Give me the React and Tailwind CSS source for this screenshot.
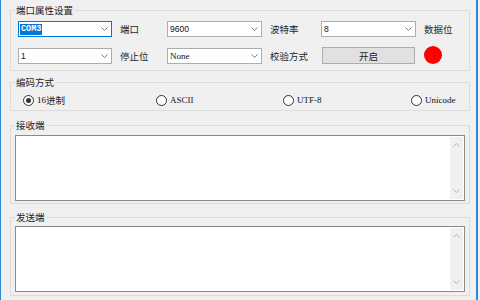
import React from 'react'

const cn = "font-['Microsoft_YaHei','Noto_Sans_CJK_SC',sans-serif] text-[9.5px] leading-[14px] text-[#1e1e1e]"
const serif = "font-['SimSun','Liberation_Serif','Noto_Sans_CJK_SC',serif] text-[9px] leading-[12px] text-[#111]"
const sans = "font-['Liberation_Sans',sans-serif] text-[8.5px] leading-[12px] text-[#111]"

function Chevron({ up, color = '#8a8a8a' }) {
  return (
    <svg width="7" height="4" viewBox="0 0 7 4" fill="none">
      <polyline
        points={up ? '0.5,3.5 3.5,0.5 6.5,3.5' : '0.5,0.5 3.5,3.5 6.5,0.5'}
        stroke={color}
        strokeWidth="1"
      />
    </svg>
  )
}

function Combo({ children, focused }) {
  return (
    <div
      className={
        focused
          ? 'flex h-[16px] items-center justify-between bg-white border border-[#0078d7] pl-[1px] pr-[3px]'
          : 'flex h-[16px] items-center justify-between bg-white border border-[#adadad] pl-[1px] pr-[3px]'
      }
    >
      {children}
      <Chevron color="#7a7a7a" />
    </div>
  )
}

function Label({ children }) {
  return <span className={`${cn} pl-[8px] whitespace-nowrap`}>{children}</span>
}

function Radio({ checked, children }) {
  return (
    <div className="flex items-center gap-[3px]">
      <span className="flex h-[11px] w-[11px] items-center justify-center rounded-full border border-[#333] bg-white">
        {checked && <span className="h-[5px] w-[5px] rounded-full bg-[#333]" />}
      </span>
      <span className="flex items-center whitespace-nowrap">{children}</span>
    </div>
  )
}

function Group({ title, className, children }) {
  return (
    <fieldset className={`w-[460px] border border-[#dcdcdc] p-0 ${className}`}>
      <legend className={`${cn} ml-[4px] px-[1px]`}>{title}</legend>
      {children}
    </fieldset>
  )
}

function TextBox() {
  return (
    <div className="flex h-[66px] w-[450px] border border-[#8a8a8a] bg-white">
      <div className="flex-1" />
      <div className="my-[1px] mr-[1px] flex w-[13px] flex-col items-center justify-between bg-[#f0f0f0] pt-[6px] pb-[6px]">
        <Chevron up color="#b4b4b4" />
        <Chevron color="#b4b4b4" />
      </div>
    </div>
  )
}

export default function App() {
  return (
    <div className="flex h-[300px] w-[480px] overflow-hidden border-l border-[#2b88d8] bg-[#f0f0f0]">
      <div className="flex w-[475px] flex-col pl-[9px] pt-[3px]">

        {/* 端口属性设置 */}
        <Group title="端口属性设置">
          <div className="grid grid-cols-[94px_55px_95px_59px_95px_1fr] grid-rows-[16px_16px] items-center gap-y-[11px] pl-[7px] pt-[4px] pb-[6px]">
            <Combo focused>
              <span className="font-['Liberation_Mono',monospace] text-[8.5px] leading-[11px] font-bold bg-[#0078d7] px-[1px] text-white">COM3</span>
            </Combo>
            <Label>端口</Label>
            <Combo>
              <span className={`${sans} pl-[1px]`}>9600</span>
            </Combo>
            <Label>波特率</Label>
            <Combo>
              <span className={`${sans} pl-[1px]`}>8</span>
            </Combo>
            <Label>数据位</Label>

            <Combo>
              <span className={`${sans} pl-[1px]`}>1</span>
            </Combo>
            <Label>停止位</Label>
            <Combo>
              <span className={`${serif} pl-[1px]`}>None</span>
            </Combo>
            <Label>校验方式</Label>
            <button className={`${cn} ml-[1px] flex h-[17px] w-[93px] items-center justify-center border border-[#adadad] bg-[#e1e1e1] -mt-[1px]`}>
              开启
            </button>
            <div className="pl-[8px]">
              <div className="h-[18px] w-[18px] -mt-[2px] rounded-full bg-[#ff0000]" />
            </div>
          </div>
        </Group>

        {/* 编码方式 */}
        <Group title="编码方式" className="mt-[4px]">
          <div className="grid h-[21px] grid-cols-[133px_127px_128px_1fr] items-center pl-[12px] pb-[4px] pt-[4px]">
            <Radio checked>
              <span className={serif}>16</span>
              <span className={cn}>进制</span>
            </Radio>
            <Radio>
              <span className={serif}>ASCII</span>
            </Radio>
            <Radio>
              <span className={serif}>UTF-8</span>
            </Radio>
            <Radio>
              <span className={serif}>Unicode</span>
            </Radio>
          </div>
        </Group>

        {/* 接收端 */}
        <Group title="接收端" className="mt-[7px]">
          <div className="pl-[4px] pt-[3px] pb-[2px]">
            <TextBox />
          </div>
        </Group>

        {/* 发送端 */}
        <Group title="发送端" className="mt-[6px]">
          <div className="pl-[4px] pt-[2px] pb-[3px]">
            <TextBox />
          </div>
        </Group>
      </div>
      <div className="h-full w-[2px] bg-[#2b88d8]" />
      <div className="h-full w-[2px] bg-[#f0f0f0]" />
    </div>
  )
}
